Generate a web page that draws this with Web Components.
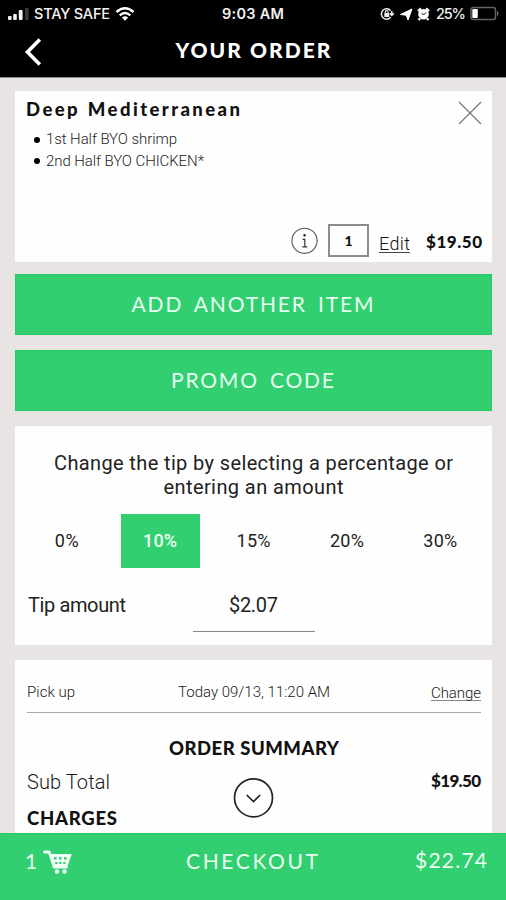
<!DOCTYPE html>
<html lang="en">
<head>
<meta charset="utf-8">
<title>Your Order</title>
<style>
html, body { margin: 0; height: 900px; overflow: hidden; background: #e8e4e3; }
</style>
</head>
<body>
<order-app></order-app>
<script>
/* Single line of text; "fit" spreads the letters over a given width. */
class FitText extends HTMLElement {
  connectedCallback() {
    const root = this.attachShadow({ mode: 'open' });
    root.innerHTML = `<style>
      :host { display: block; width: max-content; white-space: nowrap; flex: none; }
      span { display: inline-block; }
    </style><span><slot></slot></span>`;
    const fit = parseFloat(this.getAttribute('fit'));
    const n = this.textContent.length;
    if (!fit || n < 2) return;
    const span = root.querySelector('span');
    const gap = (fit - span.getBoundingClientRect().width) / (n - 1);
    span.style.letterSpacing = gap + 'px';
    span.style.marginRight = -gap + 'px';
  }
}
customElements.define('fit-text', FitText);

const define = (name, html) => customElements.define(name, class extends HTMLElement {
  constructor() {
    super();
    const t = document.createElement('template');
    t.innerHTML = html;
    this.attachShadow({ mode: 'open' }).append(t.content.cloneNode(true));
  }
});

define('status-bar', `<style>
  :host { display: grid; grid-template-columns: 1fr auto 1fr; height: 27px; align-items: center; color: #f2f2f2; font: 500 14.5px/27px Inter, sans-serif; }
  div { display: flex; align-items: center; }
  .l { padding-left: 8px; }
  .r { justify-content: flex-end; padding-right: 6px; }
  svg { display: block; flex: none; }
  .t { font-weight: 600; }
</style>
<div class="l">
  <svg width="22" height="14" viewBox="0 0 22 14"><g fill="#f4f4f4"><rect y="9" width="3.6" height="4" rx="1"/><rect x="5.2" y="7" width="3.6" height="6" rx="1"/><rect x="10.8" y="3" width="3.8" height="10" rx="1"/></g><rect x="17" y="1" width="3.6" height="12" rx="1" fill="#3a3a3a"/></svg>
  <fit-text fit="76" style="margin-left:4px">STAY SAFE</fit-text>
  <svg width="20" height="16" viewBox="0 0 20 16" style="margin-left:5px"><g fill="none" stroke="#fff" stroke-width="2.4"><path d="M1.5 6Q10-1.500 18.500 6"/><path d="M4.700 9.300Q10 4.700 15.300 9.300"/></g><path d="M6.900 11.500Q10 9 13.100 11.500L10 14.700Z" fill="#fff"/></svg>
</div>
<fit-text class="t" fit="62">9:03 AM</fit-text>
<div class="r">
  <svg width="54" height="16" viewBox="0 0 54 16"><path d="M11.600 4.700A5.200 5.200 0 1 0 11.600 11.300M12.800 5v4M10.800 7.200l2 2.200 2-2.200" fill="none" stroke="#eee" stroke-width="1.500"/><rect x="5.300" y="7" width="5" height="4" rx=".6" fill="#eee"/><path d="M6.300 7.500V6a1.400 1.400 0 0 1 2.800 0v1.500" fill="none" stroke="#eee" stroke-width="1.100"/><path d="M21.500 8.500L33 3 29 14 27.300 9.200Z" fill="#fff" stroke="#fff" stroke-width="1"/><circle cx="44.500" cy="8.200" r="5.300" fill="#fff"/><path d="M39 5.200L42 2.500M50 5.200L47 2.500M41 12.500L39.500 14M48 12.500L49.500 14" stroke="#fff" stroke-width="2.400"/><path d="M42.500 7L44.500 9 47 6.500" fill="none" stroke="#111" stroke-width="1"/></svg>
  <fit-text fit="30" style="margin:0 4px 0 3px">25%</fit-text>
  <svg width="30" height="15" viewBox="0 0 30 15"><rect x="1" y="1.500" width="24.500" height="12" rx="2.500" fill="none" stroke="#626262" stroke-width="1.500"/><path d="M27 4.800Q29.800 7.500 27 10.200" fill="#777"/><rect x="2.300" y="3" width="5.500" height="9" rx="1" fill="#fff"/></svg>
</div>`);

define('title-bar', `<style>
  :host { display: grid; grid-template-columns: 1fr auto 1fr; align-items: center; height: 50px; color: #fff; font: 900 21px/30px Lato, sans-serif; }
  svg { display: block; margin: -1px 0 0 24px; }
  fit-text { position: relative; top: -2px; }
</style>
<svg width="18" height="28" viewBox="0 0 18 28"><path d="M15.800 1.500L3.500 14 15.800 26.500" fill="none" stroke="#fff" stroke-width="3.600"/></svg>
<fit-text fit="155">YOUR ORDER</fit-text>`);

define('ui-card', `<style>:host { display: block; background: #fefefe; box-sizing: border-box; }</style><slot></slot>`);

define('wide-button', `<style>
  :host { display: flex; justify-content: center; align-items: center; height: 61px; background: #32cf71; color: #e6fff0; font: 400 21px/28px Lato, sans-serif; word-spacing: 4px; box-shadow: inset 0 0 0 1px #24ca68; box-sizing: border-box; padding: 0 2px 2px 0; }
</style><slot></slot>`);

define('order-item', `<style>
  :host { display: flex; flex-direction: column; justify-content: space-between; height: 171px; box-sizing: border-box; padding: 5px 10px 5px 11px; color: #111; }
  .top, .bottom, li { display: flex; }
  .top { justify-content: space-between; }
  h2 { margin: 0; font: 900 18.500px/26px Lato, sans-serif; word-spacing: 1px; }
  ul { list-style: none; margin: 7px 0 0 8px; padding: 0; font: 300 15px/21.500px Roboto, sans-serif; color: #222; }
  li { align-items: center; gap: 6px; }
  li::before { content: ""; width: 6px; height: 6px; border-radius: 50%; background: #000; }
  .close { margin-top: 5px; }
  svg { display: block; flex: none; }
  .bottom { justify-content: flex-end; align-items: center; }
  .qty { width: 41px; height: 33px; box-sizing: border-box; border: 2px solid #8c8c8c; display: grid; place-items: center; margin: 0 10px 0 10px; font: 900 14px/20px Lato, sans-serif; }
  .edit { font: 300 18px/20px Roboto, sans-serif; border-bottom: 1px solid #444; height: 18px; line-height: 20px; margin-top: 6px; }
  .price { font: 900 17px/22px Lato, sans-serif; margin: 3px 0 0 16px; }
</style>
<div class="top">
  <div><h2><fit-text fit="214">Deep Mediterranean</fit-text></h2>
  <ul><li><fit-text fit="131">1st Half BYO shrimp</fit-text></li><li><fit-text fit="158">2nd Half BYO CHICKEN*</fit-text></li></ul></div>
  <svg class="close" width="24" height="24" viewBox="0 0 24 24"><path d="M1 1L23 23M23 1L1 23" stroke="#777" stroke-width="1.200"/></svg>
</div>
<div class="bottom">
  <svg width="27" height="27" viewBox="0 0 27 27"><circle cx="13.500" cy="13.800" r="12.600" fill="none" stroke="#555" stroke-width="1.100"/><circle cx="13.600" cy="8.300" r="1.200" fill="#222"/><path d="M11.500 12.300h2.300v7.200M11.300 19.800h4.900" fill="none" stroke="#333" stroke-width="1.200"/></svg>
  <div class="qty">1</div>
  <fit-text class="edit" fit="31">Edit</fit-text>
  <fit-text class="price" fit="56">$19.50</fit-text>
</div>`);

define('tip-panel', `<style>
  :host { display: block; height: 219px; box-sizing: border-box; padding: 25px 4px 0; color: #222; font: 400 20px/24px Roboto, sans-serif; }
  .q { display: flex; flex-direction: column; align-items: center; }
  .opts { display: grid; grid-template-columns: repeat(5, 79px); column-gap: 14.400px; justify-content: center; margin-top: 15px; font-size: 18px; }
  .opts div { height: 54px; box-sizing: border-box; display: grid; place-items: center; padding-top: 1px; }
  .on { background: #32cf71; color: #eafff2; font-weight: 500; }
  .amount { display: grid; grid-template-columns: 1fr 122px 1fr; margin: 18px 9px 0; height: 46px; line-height: 38px; }
  .value { border-bottom: 1px solid #888; display: flex; justify-content: center; }
</style>
<div class="q"><fit-text fit="399">Change the tip by selecting a percentage or</fit-text><fit-text fit="180">entering an amount</fit-text></div>
<div class="opts"><div><fit-text fit="24">0%</fit-text></div><div class="on"><fit-text fit="34">10%</fit-text></div><div><fit-text fit="34">15%</fit-text></div><div><fit-text fit="34">20%</fit-text></div><div><fit-text fit="34">30%</fit-text></div></div>
<div class="amount"><fit-text fit="98">Tip amount</fit-text><div class="value"><fit-text fit="49">$2.07</fit-text></div></div>`);

define('order-summary', `<style>
  :host { display: block; height: 174px; box-sizing: border-box; padding: 14px 11px 0 12px; color: #1a1a1a; font: 300 20px/26px Roboto, sans-serif; overflow: hidden; }
  .pick { display: grid; grid-template-columns: 1fr auto 1fr; height: 38px; border-bottom: 1px solid #aaa; font-size: 15px; line-height: 37px; }
  .pick :last-child { justify-self: end; }
  .change { line-height: 16px; height: 15px; margin-top: 11px; border-bottom: 1px solid #888; }
  .b { font-family: Lato, sans-serif; font-weight: 900; color: #111; }
  .h { margin: 22px auto 0; font-size: 18.500px; }
  .sub { display: flex; justify-content: space-between; margin-top: 8px; }
  .sub .b { font-size: 17px; margin-top: -1px; }
  .c { font-size: 18.500px; margin-top: 10px; }
</style>
<div class="pick"><fit-text fit="48">Pick up</fit-text><fit-text fit="152">Today 09/13, 11:20 AM</fit-text><fit-text class="change" fit="50">Change</fit-text></div>
<fit-text class="b h" fit="170">ORDER SUMMARY</fit-text>
<div class="sub"><fit-text fit="83">Sub Total</fit-text><fit-text class="b" fit="50">$19.50</fit-text></div>
<fit-text class="b c" fit="90">CHARGES</fit-text>`);

define('scroll-hint', `<style>
  :host { position: absolute; left: 233px; top: 777px; display: block; }
  svg { display: block; }
</style><svg width="41" height="41" viewBox="0 0 41 41"><circle cx="20.500" cy="20.800" r="19" fill="#fff" stroke="#222" stroke-width="1.700"/><path d="M13.800 18L20.500 24.500 27.200 18" fill="none" stroke="#222" stroke-width="1.700"/></svg>`);

define('checkout-bar', `<style>
  :host { display: grid; grid-template-columns: 1fr auto 1fr; height: 67px; box-sizing: border-box; padding: 14px 23px 0 21px; background: #32cf71; box-shadow: inset 0 1px #24ca68; color: #e9fff2; font: 400 21px/28px Lato, sans-serif; }
  .cart { display: flex; gap: 6px; margin-left: 4px; }
  svg { display: block; margin-top: 3px; }
  .total { justify-self: end; margin: -1px -4px 0 0; }
</style>
<div class="cart"><span>1</span><svg width="30" height="25" viewBox="0 0 30 25"><path d="M1.500 2H6.200L11.300 17.200H23.500" fill="none" stroke="#f0fff5" stroke-width="2.800" stroke-linecap="round" stroke-linejoin="round"/><path d="M7.500 4H28.800L24.500 16.200H11.500Z" fill="#f0fff5"/><g fill="#32cf71"><rect x="11" y="7.200" width="2.600" height="2.300"/><rect x="16" y="7.200" width="2.600" height="2.300"/><rect x="21" y="7.200" width="2.600" height="2.300"/><rect x="12.300" y="12" width="2.200" height="2"/><rect x="16.200" y="12" width="2.200" height="2"/><rect x="20.200" y="12" width="2.200" height="2"/></g><circle cx="14" cy="21.500" r="2.200" fill="#f0fff5"/><circle cx="21.500" cy="21.500" r="2.200" fill="#f0fff5"/></svg></div>
<fit-text fit="132">CHECKOUT</fit-text>
<fit-text class="total" fit="72">$22.74</fit-text>`);

define('order-app', `<style>
  :host { display: flex; flex-direction: column; width: 506px; height: 900px; position: relative; background: #e8e4e3; }
  header { background: #000; height: 77px; border-bottom: 1px solid #8d8a89; flex: none; }
  main { flex: 1; min-height: 0; overflow: hidden; padding: 13px 14px 0 15px; }
  wide-button { margin-top: 15px; }
  wide-button.first { margin-top: 12.400px; }
  ui-card.gap { margin-top: 14.500px; }
  ui-card.last { margin-top: 15.100px; }
</style>
<header><status-bar></status-bar><title-bar></title-bar></header>
<main>
  <ui-card><order-item></order-item></ui-card>
  <wide-button class="first"><fit-text fit="242">ADD ANOTHER ITEM</fit-text></wide-button>
  <wide-button><fit-text fit="163">PROMO CODE</fit-text></wide-button>
  <ui-card class="gap"><tip-panel></tip-panel></ui-card>
  <ui-card class="last"><order-summary></order-summary></ui-card>
</main>
<checkout-bar></checkout-bar>
<scroll-hint></scroll-hint>`);
</script>
</body>
</html>
